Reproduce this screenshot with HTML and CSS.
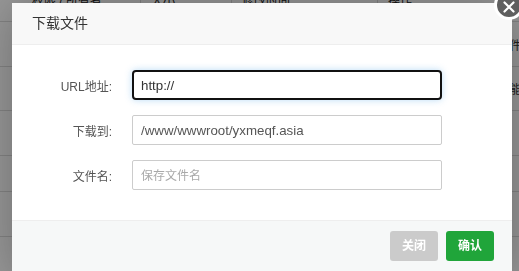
FILE: index.html
```html
<!DOCTYPE html>
<html lang="zh-CN">
<head>
<meta charset="utf-8">
<title>下载文件</title>
<link rel="stylesheet" href="styles.css">
</head>
<body>
<div class="page">
  <table class="files">
    <tr class="head">
      <td class="c1">权限 / 所有者</td>
      <td class="c2">大小</td>
      <td class="c3">修改时间</td>
      <td class="c4">操作</td>
    </tr>
    <tr class="r45"><td class="c1"></td><td class="c2"></td><td class="c3"></td><td class="c4 tail">文件</td></tr>
    <tr class="r44"><td class="c1"></td><td class="c2"></td><td class="c3"></td><td class="c4 tail">功能</td></tr>
    <tr class="r45"><td class="c1"></td><td class="c2"></td><td class="c3"></td><td class="c4"></td></tr>
    <tr class="r36"><td class="c1"></td><td class="c2"></td><td class="c3"></td><td class="c4"></td></tr>
    <tr class="r45"><td class="c1"></td><td class="c2"></td><td class="c3"></td><td class="c4"></td></tr>
  </table>
</div>
<div class="mask"></div>
<div class="modal">
  <div class="modal-head">下载文件</div>
  <div class="modal-body">
    <div class="row">
      <label class="label">URL地址:</label>
      <input class="input focus" type="text" value="http://">
    </div>
    <div class="row">
      <label class="label">下载到:</label>
      <input class="input" type="text" value="/www/wwwroot/yxmeqf.asia">
    </div>
    <div class="row">
      <label class="label">文件名:</label>
      <input class="input" type="text" placeholder="保存文件名">
    </div>
  </div>
  <div class="modal-foot">
    <span class="btn btn-close">关闭</span>
    <span class="btn btn-ok">确认</span>
  </div>
  <span class="close-icon">
    <svg width="12" height="12" viewBox="0 0 12 12"><path d="M1.5 1.5 L10.5 10.5 M10.5 1.5 L1.5 10.5" stroke="#fff" stroke-width="2.2" stroke-linecap="round" fill="none"/></svg>
  </span>
</div>
</body>
</html>
```
FILE: styles.css
```css
html, body {
  margin: 0;
  padding: 0;
  width: 519px;
  height: 271px;
  overflow: hidden;
  background: #fff;
  font-family: "Liberation Sans", "Noto Sans CJK SC", sans-serif;
}

.page {
  margin-top: -22px;
}

.files {
  border-collapse: collapse;
  width: 560px;
  font-size: 12px;
  color: #333;
}

.files td {
  border-bottom: 1px solid #ddd;
  padding: 0 10px;
  white-space: nowrap;
  overflow: hidden;
}

.files .head td {
  height: 43px;
  border-right: 1px solid #ddd;
  color: #222;
}

.files .head td.c4 { border-right: 0; }

.files .c1 { width: 98px; padding-left: 32px; }
.files .c2 { width: 70px; }
.files .c3 { width: 125px; }

.files td.tail { padding-left: 120px; }

.r45 td { height: 44px; }
.r44 td { height: 43px; }
.r36 td { height: 35px; }

.mask {
  position: fixed;
  inset: 0;
  background: rgba(0, 0, 0, 0.4);
}

.modal {
  position: absolute;
  left: 12px;
  top: 3px;
  width: 500px;
  background: #fff;
  box-shadow: 1px 1px 50px rgba(0, 0, 0, 0.3);
}

.modal-head {
  height: 41px;
  line-height: 41px;
  padding-left: 20px;
  background: #f8f8f8;
  border-bottom: 1px solid #eee;
  font-size: 14px;
  color: #333;
}

.modal-body {
  padding: 25px 0 30px;
  display: flex;
  flex-direction: column;
  gap: 15px;
}

.row {
  display: flex;
  align-items: center;
  gap: 20px;
}

.label {
  width: 100px;
  text-align: right;
  font-size: 12px;
  color: #555;
}

.input {
  width: 310px;
  height: 30px;
  box-sizing: border-box;
  border: 1px solid #ccc;
  border-radius: 2px;
  padding: 0 8px;
  font-family: "Liberation Sans", "Noto Sans CJK SC", sans-serif;
  font-size: 13.3px;
  color: #555;
  outline: none;
  background: #fff;
}

.input::placeholder {
  color: #a9a9a9;
  font-size: 12px;
}

.input.focus {
  border: 2px solid #111;
  border-radius: 4px;
  padding-left: 7px;
  color: #333;
  box-shadow: 0 0 7px rgba(102, 175, 233, 0.45);
}

.modal-foot {
  background: #f6f8f8;
  border-top: 1px solid #eee;
  padding: 10px 18px 20px;
  display: flex;
  justify-content: flex-end;
  gap: 8px;
}

.btn {
  width: 48px;
  height: 30px;
  line-height: 30px;
  border-radius: 3px;
  color: #fff;
  font-size: 12px;
  font-weight: bold;
  text-align: center;
}

.btn-close { background: #cbcbcb; }
.btn-ok { background: #20a53a; }

.close-icon {
  position: absolute;
  left: 482px;
  top: -13px;
  width: 24px;
  height: 24px;
  border: 3px solid #fff;
  border-radius: 50%;
  background: #5f5f5f;
  display: flex;
  align-items: center;
  justify-content: center;
}

.close-icon svg {
  margin-top: 4px;
}
```
